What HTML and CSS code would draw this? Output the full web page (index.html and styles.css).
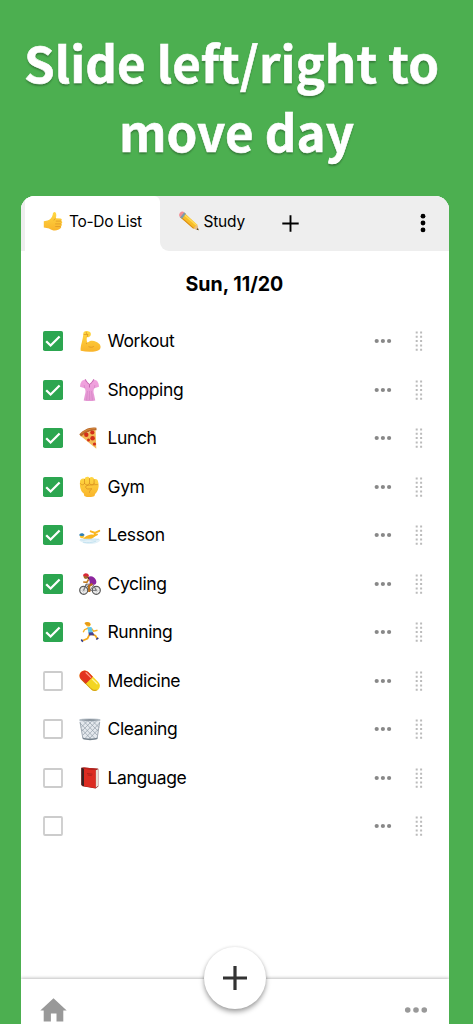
FILE: index.html
```html
<!DOCTYPE html>
<html lang="en">
<head>
<meta charset="utf-8">
<meta name="viewport" content="width=device-width, initial-scale=1">
<title>To-Do List</title>
<link rel="stylesheet" href="styles.css">
</head>
<body>
<svg class="defs" aria-hidden="true">
  <defs>
    <linearGradient id="skin" x1="0" y1="0" x2="0" y2="1"><stop offset="0" stop-color="#ffd843"/><stop offset="1" stop-color="#f9b42b"/></linearGradient>
    <linearGradient id="pink" x1="0" y1="0" x2="0" y2="1"><stop offset="0" stop-color="#f3a3e0"/><stop offset="1" stop-color="#e396d2"/></linearGradient>
    <symbol id="more" viewBox="0 0 18 6"><circle cx="2.7" cy="3" r="2.1"/><circle cx="8.9" cy="3" r="2.1"/><circle cx="15.1" cy="3" r="2.1"/></symbol>
    <symbol id="grip" viewBox="0 0 8 20"><path d="M.7 .4h2v2h-2zM5.1 .4h2v2h-2zM.7 4.7h2v2h-2zM5.1 4.7h2v2h-2zM.7 9h2v2h-2zM5.1 9h2v2h-2zM.7 13.4h2v2h-2zM5.1 13.4h2v2h-2zM.7 17.8h2v2h-2zM5.1 17.8h2v2h-2z"/></symbol>
    <symbol id="on" viewBox="0 0 20 20"><rect width="20" height="20" rx="1.8" fill="#2ca650"/><path d="M3.200 10.200l4.400 4.300 9-9" fill="none" stroke="#fff" stroke-width="2.300"/></symbol>
    <symbol id="off" viewBox="0 0 20 20"><rect x="1" y="1" width="18" height="18" rx="1" fill="#fff" stroke="#ccc" stroke-width="1.8"/></symbol>
  </defs>
</svg>
<main class="page">
  <h1 class="headline"><span>Slide left/right to</span><span>move day</span></h1>
  <section class="panel">
    <nav class="tabs">
      <div class="tab tab-active">
        <svg class="tab-emoji" viewBox="0 0 20 20"><path d="M.8 10.200L4.500 9.500c2.500-.8 4.600-2.900 5.200-5.800C9.700 1.200 11.600.2 12.600 1.500c1.100 1.500.7 3.800.2 5.800L17.500 7.500c1.400.2 1.700 1.700.8 2.400 1.300.6 1.200 2.200.1 2.800.8.8.6 2.100-.4 2.600.5.9 0 2-.9 2.300-1 1.500-5.100 2.600-8.100 1.300-1.800-.6-2.500-1.600-4-1.700L.8 16.500z" fill="url(#skin)"/><path d="M12.800 10.100h5.200M12.200 12.900h5.800M12.200 15.500h5.400M12.500 7.400c-.8.500-1.500 1.200-1.600 2" fill="none" stroke="#dc9526" stroke-width=".75"/></svg>
        <span>To-Do List</span>
      </div>
      <div class="tab-rest">
        <div class="tab">
          <svg class="tab-emoji" viewBox="0 0 20 20"><path d="M5 1.500L1.100 6.300 14.600 17.600 19.600 19.300 18 13.600z" fill="#f7bd28"/><path d="M4 2.800L17.800 14.500" stroke="#ffdc55" stroke-width="1.500"/><path d="M1.600 5.900L14.600 17.300" stroke="#da8b16" stroke-width="1.100"/><path d="M14.600 17.600L19.600 19.300 18 13.600z" fill="#e9bd87"/><path d="M17.600 18.600l2 .7-.7-2.200z" fill="#333"/><path d="M7 2.800L3 7.800.7 5.900 4.800.9z" fill="#7d9bab"/><path d="M5.200 1.300L1.200 6.200C-.3 4.900-.2 3.200 1 1.700S4-.1 5.200 1.300z" fill="#f38d93"/></svg>
          <span>Study</span>
        </div>
        <svg class="tab-add" viewBox="0 0 17 17"><path d="M8.500.3v16.400M.3 8.500h16.400" stroke="#000" stroke-width="1.900"/></svg>
        <svg class="tab-menu" viewBox="0 0 6 20"><circle cx="3" cy="3.200" r="2.400"/><circle cx="3" cy="10" r="2.400"/><circle cx="3" cy="16.900" r="2.400"/></svg>
      </div>
    </nav>
    <h2 class="date">Sun, 11/20</h2>
    <ul class="list">
      <li class="item"><svg class="check"><use href="#on"/></svg>
        <svg class="emoji" viewBox="0 0 24 24"><path d="M5.300 4.300C5.600 2.300 8 1.700 10 2.200c2.600.4 3.500 2 2.600 4.200-.8 1.400-2.200 1.900-3.600 1.700-.5 2.200-.4 4 .4 5.700 2.300-2.500 5.700-2.600 8.600-1.100 4.600 1.800 5.600 5.400 3.700 7.700-2.700 2.700-12 3-19 1.300-.7-4.300 2.600-11.300 2.600-17.400z" fill="url(#skin)"/><path d="M5.700 5.500h4.200M8 2.700l.8 2.400M9.900 5.200l-.8 2.900M9.400 13.800l-1.400 1.200M10.500 17.600c2.100 1 4 .7 5.400-.2" fill="none" stroke="#d99022" stroke-width=".7"/></svg>
        <span class="label">Workout</span><svg class="more"><use href="#more"/></svg><svg class="grip"><use href="#grip"/></svg></li>
      <li class="item"><svg class="check"><use href="#on"/></svg>
        <svg class="emoji" viewBox="0 0 24 24"><path d="M7.500 1.300L4 2.700C2.600 4.500 2.100 6.500 2 8.700l4.700 1.600c1.100 2.200 1 4.200.2 6.400L5.700 22.500c3.500.8 8.100.8 11.600 0l-1.200-5.800c-.8-2.200-.9-4.200.2-6.400L21 8.700c-.1-2.200-.6-4.200-2-6l-3.500-1.400-4 5z" fill="url(#pink)"/><path d="M7.500 1.300c0 2 2 4 4 5 2-1 4-3 4-5M11.500 6.500v3" fill="none" stroke="#b85ba5" stroke-width=".8"/><path d="M6.700 10.300L6.200 7M16.300 10.300l.5-3.300M9.500 13l-.9 9M11.500 13v9M13.500 13l.9 9" stroke="#ca79ba" stroke-width=".45"/></svg>
        <span class="label">Shopping</span><svg class="more"><use href="#more"/></svg><svg class="grip"><use href="#grip"/></svg></li>
      <li class="item"><svg class="check"><use href="#on"/></svg>
        <svg class="emoji" viewBox="0 0 24 24"><path d="M2.500 9.700L17.500 3.300 18.300 22.800z" fill="#f2b955"/><path d="M1.300 8.300C5.500 3.500 12 .4 18.400 1.700l.2 2.500C13 4.200 7.500 6.700 3 10.500z" fill="#b96828"/><path d="M3.500 7.500C7.500 4 12.500 2.400 17.500 2.600" fill="none" stroke="#dc9143" stroke-width=".8"/><g fill="#d32f1b"><circle cx="8.300" cy="8.700" r="2.200"/><circle cx="14.300" cy="6.500" r="2.100"/><circle cx="14.600" cy="12.200" r="2.300"/><circle cx="10.500" cy="14" r="1.500"/><circle cx="16.500" cy="18" r="1.600"/></g></svg>
        <span class="label">Lunch</span><svg class="more"><use href="#more"/></svg><svg class="grip"><use href="#grip"/></svg></li>
      <li class="item"><svg class="check"><use href="#on"/></svg>
        <svg class="emoji" viewBox="0 0 24 24"><path d="M2 7c-.2-2.500 2.500-4.200 4.500-3 .7-2.800 4.200-2.900 5-1 1.400-1.900 4.300-1.200 4.600 1.200 2.200-.8 4 .5 4 2.600 1.200 3.700.6 9-3 12.200L16.500 21c-2.500 1.500-7.300 1.500-10.200-.1l-.5-2.300C2.500 16.200 1.600 11.300 2 7z" fill="url(#skin)"/><path d="M6.500 4v5M11.500 3.200v5.500M16.100 4.300v4.700M2.300 8.300c1 2 3.400 2 4.200 0 1 2.100 4 2.100 5 0 1 2 3.800 2 4.600 0M19.800 9.600c-4 .2-8.300 0-11.500 1.200-1.400 1.300-.2 3.200 1.500 3.200l4-.2c-1.600 1.200-2.300 2.500-2.300 4" fill="none" stroke="#d78e20" stroke-width=".75"/></svg>
        <span class="label">Gym</span><svg class="more"><use href="#more"/></svg><svg class="grip"><use href="#grip"/></svg></li>
      <li class="item"><svg class="check"><use href="#on"/></svg>
        <svg class="emoji" viewBox="0 0 24 24"><path d="M1 17c3-2 6-2.200 10-2.200s9 .2 11.500 2.200c-1.500 2.700-6 3.900-10.500 4S3 19.500 1 17z" fill="#e3f1f8"/><path d="M5 16c2.500-2.700 5.500-4 9-4.500" stroke="#f9b61f" stroke-width="0" fill="none"/><path d="M5 15.700c2.500-2.500 5.500-3.800 8-4.200 1.800 0 3 .4 4 1.300-.8 1.500-2 2.400-4 3z" fill="#f9b61f"/><path d="M16 13l1.200-3-4.500-1.700M17 9.800l4.300-2M15 13.500l4-2" fill="none" stroke="#f9b61f" stroke-width="1.900" stroke-linecap="round" stroke-linejoin="round"/><circle cx="4" cy="13" r="2.200" fill="#ffc52c"/><path d="M1.200 12.500c0-2.700 4.400-3 5.400-.3L4.200 13.300z" fill="#2f7eb4"/><path d="M2 16.700c5 1.200 6-.7 10-.1s5 .5 9-.5M5 19.200c4.500.9 9 .5 13-1" fill="none" stroke="#b8dcec" stroke-width=".7"/></svg>
        <span class="label">Lesson</span><svg class="more"><use href="#more"/></svg><svg class="grip"><use href="#grip"/></svg></li>
      <li class="item"><svg class="check"><use href="#on"/></svg>
        <svg class="emoji" viewBox="0 0 24 24"><g fill="#eee" fill-opacity=".5" stroke="#555" stroke-width="1.200"><circle cx="5.700" cy="18.300" r="4"/><circle cx="18.300" cy="18.300" r="4"/></g><path d="M5.700 14.300v8M1.700 18.300h8M18.300 14.300v8M14.300 18.300h8M2.900 15.500l5.600 5.600M8.500 15.500l-5.600 5.600M15.500 15.500l5.600 5.600M21.100 15.500l-5.600 5.600" stroke="#999" stroke-width=".4"/><path d="M5.700 18.300L8 12.200l4 6.100 3.500-5 2.800 5H12M8 12.200h7" fill="none" stroke="#5f5f65" stroke-width=".9"/><path d="M9.500 5.500c3.200-2.200 6.500-1.200 8.300 2.300 1 2.200.7 4.200-1.300 4.900h-5c.6-2.300.3-4.700-2-7.200z" fill="#8c269e"/><path d="M10.500 7.500L8.800 10.300 5.200 10" fill="none" stroke="#c37b20" stroke-width="1.600"/><path d="M14.500 12l-3.500 2 .3 6" fill="none" stroke="#b56e1f" stroke-width="2.300"/><circle cx="7.900" cy="4.500" r="2.400" fill="#a86927"/><path d="M5 3.800C5 .5 10 .2 10.900 3.200l-.2 1.500z" fill="#d92837"/><path d="M9.800 5.300l1 2" stroke="#4b2c1c" stroke-width="1.200"/></svg>
        <span class="label">Cycling</span><svg class="more"><use href="#more"/></svg><svg class="grip"><use href="#grip"/></svg></li>
      <li class="item"><svg class="check"><use href="#on"/></svg>
        <svg class="emoji" viewBox="0 0 24 24"><path d="M12 13.500L9.500 18.500 5 20.500M13.500 14l4 1.700 1.600 3" fill="none" stroke="#f5a91c" stroke-width="1.700"/><path d="M10.500 8L6.500 9.700l-1.300 2.500M13.500 8.500l2 2.700 4-1" fill="none" stroke="#f8b322" stroke-width="1.400"/><path d="M9.300 7.200l4.200-.2 1.500 6-4.400.5z" fill="#62c7ed"/><path d="M10.500 12.500l4.400-.2 1.600 3-5.400.2z" fill="#4a438f"/><circle cx="10.300" cy="4.500" r="2.300" fill="#ffc53a"/><path d="M6.500 3c1.700-1.700 5.500-1 6 1.400l-1 1.500C9.500 5.800 7.500 5.800 6.500 3z" fill="#e99b13"/><path d="M3.300 19.500l1.500 2.300M18.300 19.500l2-1.700" stroke="#34387e" stroke-width="1.600"/></svg>
        <span class="label">Running</span><svg class="more"><use href="#more"/></svg><svg class="grip"><use href="#grip"/></svg></li>
      <li class="item"><svg class="check"><use href="#off"/></svg>
        <svg class="emoji" viewBox="0 0 24 24"><g transform="rotate(45 11.700 11.800)"><rect x="-.6" y="6.600" width="24.600" height="10.400" rx="5.200" fill="#f3d521"/><path d="M11 6.600H4.600a5.200 5.200 0 0 0 0 10.400H11z" fill="#e3341f"/><path d="M3.500 8.700h6.500" stroke="#ff9b85" stroke-width="1.300" stroke-linecap="round"/><path d="M12.500 8.700h6.500" stroke="#fff29a" stroke-width="1.300" stroke-linecap="round"/><path d="M4.600 16.500h13.500c2.300 0 4-1 5-3" fill="none" stroke="#ba7912" stroke-width=".9" opacity=".7"/></g></svg>
        <span class="label">Medicine</span><svg class="more"><use href="#more"/></svg><svg class="grip"><use href="#grip"/></svg></li>
      <li class="item"><svg class="check"><use href="#off"/></svg>
        <svg class="emoji" viewBox="0 0 24 24"><path d="M1.500 3h20.700l-2.700 18.800c-4 1.200-11 1.200-14.800 0z" fill="#e4e8ed"/><path d="M2 6l15 15.500M5.500 4l13.500 14M10 4l10 10M14.500 4l6.500 6.500M21.500 6L7 21.500M18.500 4L5 18M14 4L4 14M9.500 4L3 10.500M20.500 12L11.500 21.500M3.500 12l9 9.500" stroke="#8e9aa6" stroke-width=".65"/><path d="M2 5l2.800 16M21.700 5l-2.500 16" stroke="#8e98a3" stroke-width=".8"/><ellipse cx="11.900" cy="3" rx="10.400" ry="1.100" fill="#77828c" stroke="#bac3cb" stroke-width=".8"/><path d="M4.700 20.500c4 1.300 10.700 1.300 14.800 0v1.600c-4 1.400-10.800 1.400-14.800 0z" fill="#75818c"/></svg>
        <span class="label">Cleaning</span><svg class="more"><use href="#more"/></svg><svg class="grip"><use href="#grip"/></svg></li>
      <li class="item"><svg class="check"><use href="#off"/></svg>
        <svg class="emoji" viewBox="0 0 24 24"><path d="M3.200 1.800L6 1.500l14.300 1.300v17.700L17.500 22.500 4.500 20.300 3.200 19z" fill="#7e1d1b"/><path d="M17.500 4.300l2.500-1.100v16.900l-2.500 1.600z" fill="#e7dfd4"/><path d="M6 2.800l11.700 1.300v18.200L6 20.300z" fill="#dc2b21"/><path d="M3.600 1.800l2.400 1v17.500l-2.400-1.600z" fill="#372222"/><path d="M4 1.800l2-.3 14.200 1.300-2.500 1.300L6 2.800z" fill="#bd231d"/><path d="M9 7.500l5.500.7M9.700 9l4 .5" stroke="#a31e1b" stroke-width=".8"/></svg>
        <span class="label">Language</span><svg class="more"><use href="#more"/></svg><svg class="grip"><use href="#grip"/></svg></li>
      <li class="item"><svg class="check"><use href="#off"/></svg><span class="emoji"></span><span class="label"></span><svg class="more"><use href="#more"/></svg><svg class="grip"><use href="#grip"/></svg></li>
    </ul>
    <footer class="bottom">
      <svg class="home" viewBox="0 0 27 24"><path d="M13.500.2L.3 12.500h3.400v11h7.200v-8h5.600v8h6.800v-11h3.400z" fill="#999"/></svg>
      <button class="fab" aria-label="Add"><svg viewBox="0 0 24 24"><path d="M12 0v24M0 12h24" stroke="#333" stroke-width="3.200"/></svg></button>
      <svg class="bottom-more" viewBox="0 0 18 6"><circle cx="2.800" cy="3" r="2.100"/><circle cx="9" cy="3" r="2.100"/><circle cx="15.200" cy="3" r="2.100"/></svg>
    </footer>
  </section>
</main>
</body>
</html>
```

FILE: styles.css
```css
* { box-sizing: border-box; }
body { margin: 0; background: #4caf50; color: #000; font-family: Inter, "Liberation Sans", sans-serif; }
svg { display: block; flex: none; }
.defs { position: absolute; width: 0; height: 0; }
.page { height: 1024px; overflow: hidden; display: flex; flex-direction: column; }
.headline { height: 196px; flex: none; margin: 0; padding: 27px 0 0; text-align: center; color: #fff; font: 700 49.300px/69px "Noto Sans CJK JP", sans-serif; white-space: nowrap; -webkit-text-stroke: .6px #fff; text-shadow: 0 1.500px 2px rgba(0, 0, 0, .3); }
.headline span { display: block; margin-right: 10px; }
.headline span + span { margin-right: 0; }
.panel { flex: 1; min-height: 0; margin: 0 23.700px 0 20.500px; background: #fff; border-radius: 14px 14px 0 0; overflow: hidden; display: flex; flex-direction: column; }
.tabs { height: 54.500px; flex: none; display: flex; padding-left: 4px; background: linear-gradient(#eee, #eee) 0 0 / 4px 100% no-repeat, linear-gradient(#eee, #eee) 130px 0 / 20px 12px no-repeat, #fff; }
.tab { display: flex; align-items: center; gap: 6px; height: 50px; font-size: 15.500px; letter-spacing: -.3px; white-space: nowrap; }
.tab-active { width: 135.500px; height: 54.500px; padding: 0 0 4.500px 18.500px; background: #fff; border-radius: 0 6px 0 0; }
.tab-emoji { width: 20px; height: 20px; }
.tab-rest { flex: 1; display: flex; background: #eee; border-radius: 0 0 0 9px; padding: 0 23.500px 0 18.500px; }
.tab-rest .tab { width: 67px; gap: 5px; letter-spacing: -.2px; }
.tab-add { width: 17px; height: 17px; margin: 19px 0 0 36.500px; }
.tab-menu { width: 6px; height: 20px; margin: 17px 0 0 auto; }
.date { margin: 0; padding-right: 1px; height: 66.600px; flex: none; text-align: center; font-size: 19.600px; font-weight: 700; line-height: 67px; }
.list { list-style: none; margin: 0; padding: 0 26.500px 0 22.800px; flex: 1; }
.item { height: 48.500px; display: flex; align-items: center; }
.check { width: 20px; height: 20px; }
.emoji { width: 24px; height: 24px; margin-left: 14.700px; }
.label { flex: 1; margin-left: 5.500px; font-size: 17.500px; letter-spacing: -.38px; line-height: 24px; white-space: nowrap; }
.more { width: 18px; height: 6px; fill: #888; }
.grip { width: 8px; height: 20px; margin-left: 22.800px; fill: #bbb; }
.bottom { position: relative; height: 45.500px; flex: none; display: flex; justify-content: space-between; padding: 19px 21.500px 0 19.800px; background: #fff; box-shadow: 0 -1px 3px rgba(0, 0, 0, .25); }
.home { width: 27px; height: 24px; }
.bottom-more { width: 24px; height: 8px; margin-top: 8.500px; fill: #999; }
.fab { position: absolute; left: 183.500px; top: -31.500px; width: 62px; height: 62px; padding: 19px; border: 0; border-radius: 50%; background: #fff; box-shadow: 0 3px 5px rgba(0, 0, 0, .35), 0 0 3px rgba(0, 0, 0, .1); }
.fab svg { width: 24px; height: 24px; }
```
